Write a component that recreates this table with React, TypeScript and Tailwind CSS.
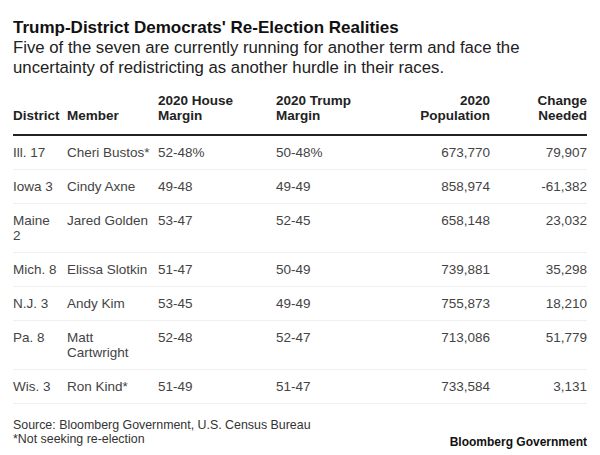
import React from 'react';

type Row = {
  district: string;
  member: string;
  house: string;
  trump: string;
  population: string;
  change: string;
};

const rows: Row[] = [
  { district: 'Ill. 17', member: 'Cheri Bustos*', house: '52-48%', trump: '50-48%', population: '673,770', change: '79,907' },
  { district: 'Iowa 3', member: 'Cindy Axne', house: '49-48', trump: '49-49', population: '858,974', change: '-61,382' },
  { district: 'Maine\n2', member: 'Jared Golden', house: '53-47', trump: '52-45', population: '658,148', change: '23,032' },
  { district: 'Mich. 8', member: 'Elissa Slotkin', house: '51-47', trump: '50-49', population: '739,881', change: '35,298' },
  { district: 'N.J. 3', member: 'Andy Kim', house: '53-45', trump: '49-49', population: '755,873', change: '18,210' },
  { district: 'Pa. 8', member: 'Matt\nCartwright', house: '52-48', trump: '52-47', population: '713,086', change: '51,779' },
  { district: 'Wis. 3', member: 'Ron Kind*', house: '51-49', trump: '51-47', population: '733,584', change: '3,131' },
];

const cols = 'grid grid-cols-[54px_91px_118px_118px_96px_97px]';

export default function App() {
  return (
    <div className="w-[600px] h-[455px] bg-white px-[13px] pt-[18px] font-['Liberation_Sans',Arial,sans-serif] overflow-hidden">
      {/* Heading */}
      <h1 className="text-[17px] leading-[20px] font-bold text-[#111]">
        Trump-District Democrats' Re-Election Realities
      </h1>
      <p className="text-[16.75px] leading-[19.5px] text-[#222] w-[560px]">
        Five of the seven are currently running for another term and face the
        <br />
        uncertainty of redistricting as another hurdle in their races.
      </p>

      {/* Table */}
      <div className="mt-[16px]">
        <div className={`${cols} items-end text-[13.5px] leading-[15px] font-bold text-[#222] pb-[11px] border-b-2 border-[#222]`}>
          <div>District</div>
          <div>Member</div>
          <div>2020 House<br />Margin</div>
          <div>2020 Trump<br />Margin</div>
          <div className="text-right">2020<br />Population</div>
          <div className="text-right">Change<br />Needed</div>
        </div>
        {rows.map((r) => (
          <div
            key={r.district}
            className={`${cols} text-[13.5px] leading-[15px] text-[#444] py-[9px] border-b border-[#f0f0f0]`}
          >
            <div className="whitespace-pre-line">{r.district}</div>
            <div className="whitespace-pre-line">{r.member}</div>
            <div>{r.house}</div>
            <div>{r.trump}</div>
            <div className="text-right">{r.population}</div>
            <div className="text-right">{r.change}</div>
          </div>
        ))}
      </div>

      {/* Footer */}
      <div className="mt-[14px] flex justify-between items-end">
        <div className="text-[12.4px] leading-[14px] text-[#333] pb-[3px]">
          <div>Source: Bloomberg Government, U.S. Census Bureau</div>
          <div>*Not seeking re-election</div>
        </div>
        <div className="text-[12px] leading-[14px] font-bold text-[#111]">Bloomberg Government</div>
      </div>
    </div>
  );
}
